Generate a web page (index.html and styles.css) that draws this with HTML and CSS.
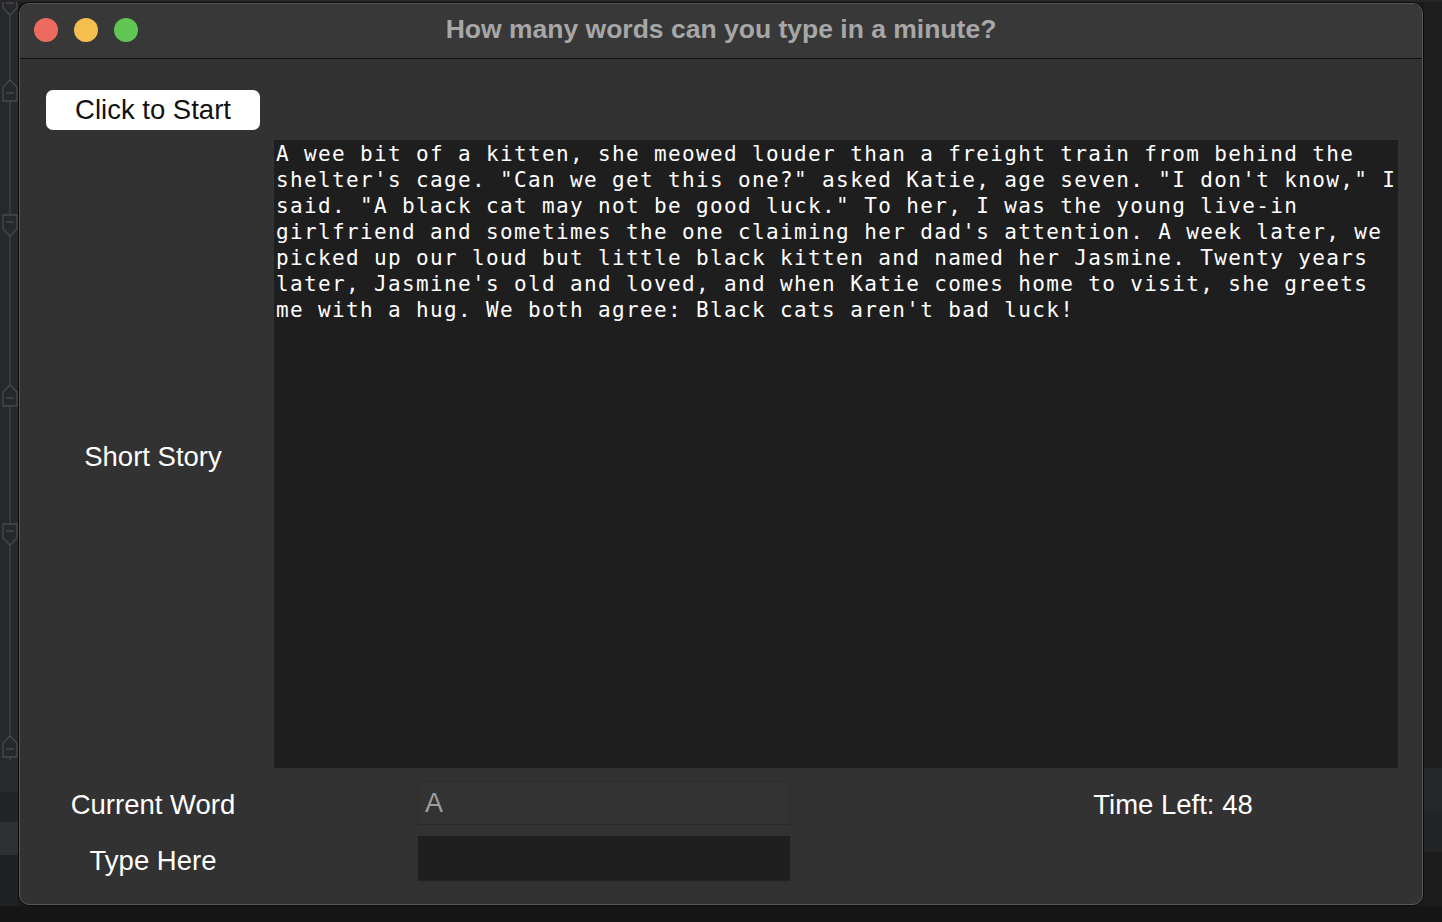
FILE: index.html
```html
<!DOCTYPE html>
<html lang="en">
<head>
<meta charset="utf-8">
<title>How many words can you type in a minute?</title>
<link rel="stylesheet" href="styles.css">
</head>
<body>
<div class="desk">
  <div class="topstrip"></div>
  <div class="mid">
    <div class="leftstrip">
      <svg class="timeline" width="18" height="904" viewBox="0 2 18 904">
        <g fill="none" stroke="#3c3e42" stroke-width="1.5">
          <path d="M10 0 V760"/>
        </g>
        <g fill="#26282b" stroke="#47494d" stroke-width="1.3">
          <path d="M3 -6 H17 V8 L10 15 L3 8 Z"/>
          <path d="M10 80 L17 87 V101 H3 V87 Z"/>
          <path d="M3 215 H17 V229 L10 236 L3 229 Z"/>
          <path d="M10 385 L17 392 V406 H3 V392 Z"/>
          <path d="M3 524 H17 V538 L10 545 L3 538 Z"/>
          <path d="M10 736 L17 743 V757 H3 V743 Z"/>
        </g>
        <g stroke="#4a4c50" stroke-width="1.3">
          <path d="M6 3 H14"/>
          <path d="M6 93 H14"/>
          <path d="M6 222 H14"/>
          <path d="M6 398 H14"/>
          <path d="M6 531 H14"/>
          <path d="M6 749 H14"/>
        </g>
      </svg>
    </div>
    <div class="window">
      <div class="frame">
        <div class="titlebar">
          <div class="lights">
            <span class="light red"></span>
            <span class="light yellow"></span>
            <span class="light green"></span>
          </div>
          <div class="title">How many words can you type in a minute?</div>
          <div></div>
        </div>
        <div class="content">
          <button class="start">Click to Start</button>
          <div class="label story-label">Short Story</div>
          <div class="story">A wee bit of a kitten, she meowed louder than a freight train from behind the
shelter's cage. "Can we get this one?" asked Katie, age seven. "I don't know," I
said. "A black cat may not be good luck." To her, I was the young live-in
girlfriend and sometimes the one claiming her dad's attention. A week later, we
picked up our loud but little black kitten and named her Jasmine. Twenty years
later, Jasmine's old and loved, and when Katie comes home to visit, she greets
me with a hug. We both agree: Black cats aren't bad luck!</div>
          <div class="label row3 cw-label">Current Word</div>
          <div class="current row3">A</div>
          <div class="label row3 time">Time Left: 48</div>
          <div class="label row4 th-label">Type Here</div>
          <div class="entry row4"></div>
        </div>
      </div>
    </div>
    <div class="rightstrip"></div>
  </div>
  <div class="bottomstrip"></div>
</div>
</body>
</html>
```
FILE: styles.css
```css
html, body {
  margin: 0;
  padding: 0;
}
body {
  width: 1442px;
  height: 922px;
  overflow: hidden;
  background: #1b1b1b;
  font-family: "Liberation Sans", Arial, sans-serif;
}
.desk {
  display: flex;
  flex-direction: column;
  height: 922px;
}
.topstrip {
  height: 2px;
  background: #262626;
}
.mid {
  display: flex;
  height: 904px;
}
.leftstrip {
  width: 18px;
  flex: none;
  background: linear-gradient(to bottom, #26282b 0, #26282b 758px, #2a2b2e 758px, #2a2b2e 790px, #232427 790px, #232427 820px, #2e2f32 820px, #2e2f32 853px, #1f2022 853px);
}
.timeline {
  display: block;
}
.rightstrip {
  width: 18px;
  flex: none;
  background: linear-gradient(to bottom, #1e1e1e 0, #1e1e1e 766px, #262728 766px, #262728 808px, #232425 808px, #232425 850px, #1c1c1c 850px);
}
.bottomstrip {
  height: 16px;
  background: #161616;
}
.window {
  width: 1406px;
  flex: none;
  box-sizing: border-box;
  border: 1px solid #0b0b0b;
  border-radius: 11px;
  background: #0b0b0b;
}
.frame {
  height: 100%;
  box-sizing: border-box;
  border: 1px solid #585858;
  border-radius: 10px;
  overflow: hidden;
  background: #323232;
  display: flex;
  flex-direction: column;
}
.titlebar {
  height: 55px;
  flex: none;
  box-sizing: border-box;
  padding-bottom: 2px;
  background: #383838;
  border-bottom: 1px solid #111;
  display: grid;
  grid-template-columns: 1fr auto 1fr;
  align-items: center;
}
.lights {
  display: flex;
  gap: 16px;
  padding-left: 14px;
}
.light {
  width: 24px;
  height: 24px;
  border-radius: 50%;
  display: block;
}
.red { background: #ed6a5e; }
.yellow { background: #f4bf4f; }
.green { background: #61c554; }
.title {
  color: #a7a7a7;
  font-weight: 700;
  font-size: 26.5px;
  white-space: nowrap;
  padding-bottom: 2px;
}
.content {
  display: grid;
  grid-template-columns: 214px 660px 450px;
  column-gap: 14px;
  align-content: start;
  padding: 31px 24px 0 26px;
}
.start {
  grid-column: 1;
  grid-row: 1;
  height: 40px;
  margin: 0;
  padding: 0;
  border: none;
  border-radius: 7px;
  background: #ffffff;
  color: #111;
  font-family: "Liberation Sans", Arial, sans-serif;
  font-size: 27.5px;
  line-height: 40px;
}
.label {
  color: #ffffff;
  font-size: 27.5px;
  display: flex;
  align-items: center;
  justify-content: center;
  white-space: nowrap;
}
.story-label {
  grid-column: 1;
  grid-row: 2;
  margin-top: 10px;
  padding-top: 6px;
}
.story {
  grid-column: 2 / 4;
  grid-row: 2;
  margin-top: 10px;
  height: 628px;
  box-sizing: border-box;
  padding: 1px 2px;
  background: #1e1e1e;
  color: #ffffff;
  font-family: "DejaVu Sans Mono", "Liberation Mono", monospace;
  font-size: 21px;
  letter-spacing: 1.36px;
  line-height: 26px;
  white-space: pre;
  overflow: hidden;
}
.row3 {
  grid-row: 3;
  margin-top: 13px;
  height: 44px;
  box-sizing: border-box;
}
.row4 {
  grid-row: 4;
  margin-top: 11px;
  height: 44px;
  box-sizing: border-box;
}
.cw-label {
  grid-column: 1;
  padding-top: 4px;
}
.th-label {
  grid-column: 1;
  padding-top: 6px;
}
.time {
  grid-column: 3;
  padding-top: 4px;
}
.current {
  grid-column: 2;
  justify-self: center;
  width: 372px;
  background: #333333;
  border: 1px solid #2e2e2e;
  border-bottom-color: #292929;
  color: #9c9c9c;
  font-size: 27px;
  display: flex;
  align-items: center;
  padding-left: 6px;
}
.entry {
  grid-column: 2;
  justify-self: center;
  width: 372px;
  background: #1f1f1f;
  box-shadow: 0 1px 1px rgba(0, 0, 0, 0.25);
}
```
